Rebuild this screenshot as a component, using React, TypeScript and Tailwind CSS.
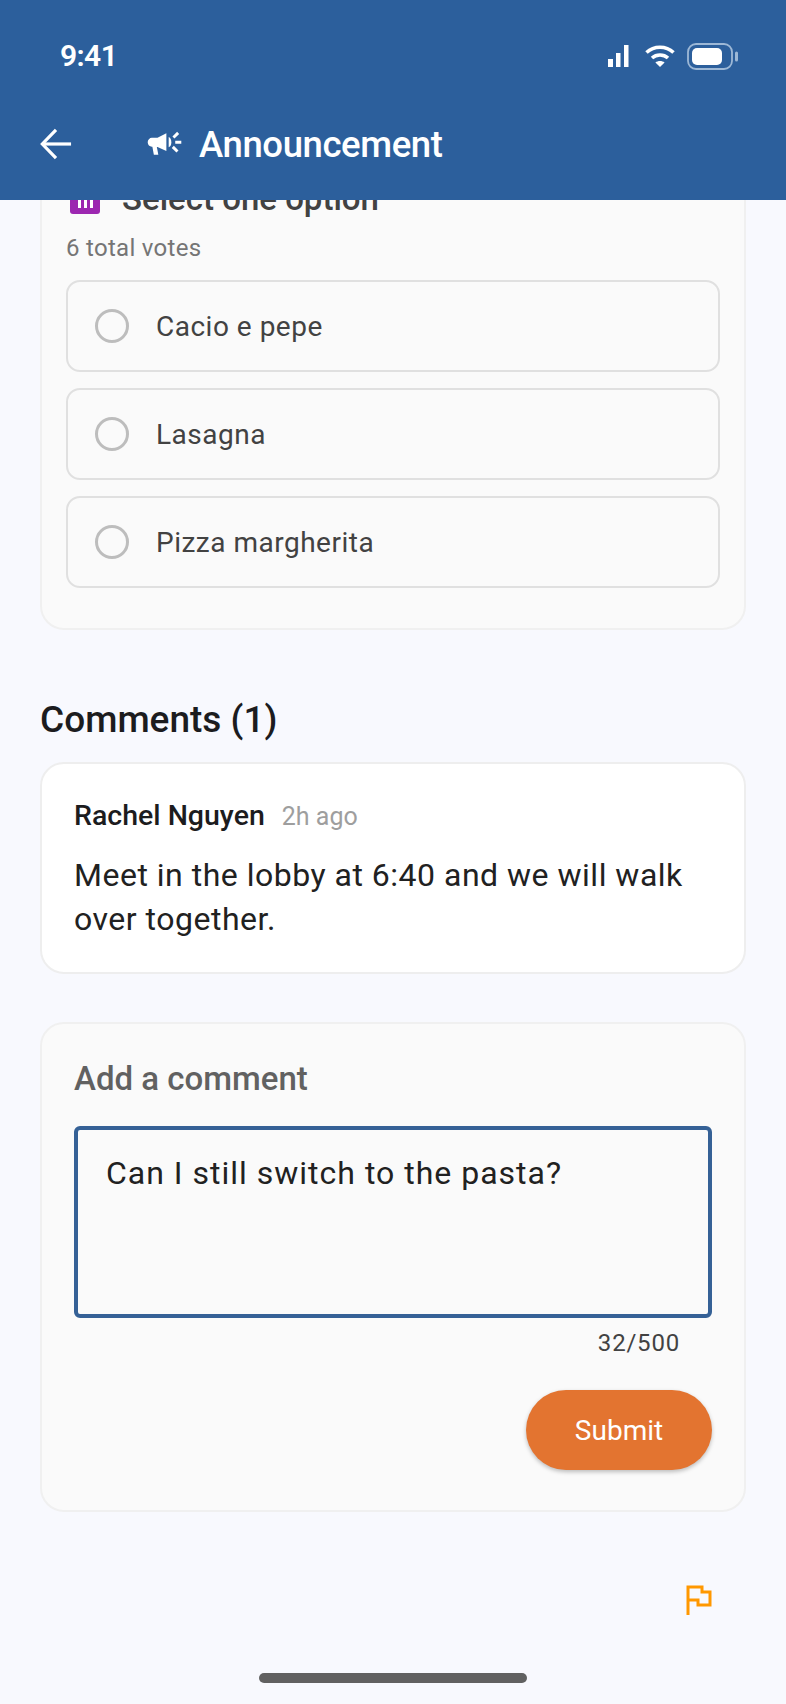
import React from "react";

const font = { fontFamily: "Roboto, 'Noto Sans', sans-serif" };

function Option({ label }: { label: string }) {
  return (
    <div className="flex h-[92px] items-center rounded-[14px] border-2 border-[#e0e0e0] pl-[27px]">
      <span className="h-[34px] w-[34px] shrink-0 rounded-full border-[3.5px] border-[#bdbdbd]" />
      <span className="ml-[27px] mt-[1px] text-[28px] leading-none tracking-[0.5px] text-[#424242]">{label}</span>
    </div>
  );
}

export default function App() {
  return (
    <div style={font} className="flex h-[1704px] w-[786px] flex-col overflow-hidden bg-[#f8f9fe]">
      <header className="z-10 flex h-[200px] shrink-0 flex-col bg-[#2c5f9c] text-white">
        <div className="flex h-[112px] items-center justify-between pl-[60px] pr-[47px]">
          <span className="mt-[-1px] text-[30px] font-semibold leading-none tracking-[-0.6px]">9:41</span>
          <div className="flex items-center">
            <svg width="24" height="24" viewBox="0 0 24 24" fill="#fff">
              <rect x="2" y="15" width="5" height="8" />
              <rect x="10" y="9" width="4.5" height="14" />
              <rect x="18" y="1" width="4.5" height="22" />
            </svg>
            <svg className="ml-[15px]" width="30" height="24" viewBox="0 0 30 24" fill="none" stroke="#fff" strokeWidth="3.6">
              <path d="M1.5 8.5C9 1.5 21 1.5 28.5 8.5" />
              <path d="M7 14C11.5 10 18.5 10 23 14" />
              <path d="M15 23l-4.6-4.6c2.6-2 6.6-2 9.2 0z" fill="#fff" stroke="none" />
            </svg>
            <svg className="ml-[12px]" width="52" height="27" viewBox="0 0 52 27" fill="none">
              <rect x="1" y="1" width="44" height="25" rx="8" stroke="#9db8d6" strokeWidth="1.8" />
              <rect x="5" y="5" width="30" height="17" rx="5" fill="#fff" />
              <rect x="48" y="8.5" width="3" height="10" rx="1.5" fill="#9db8d6" />
            </svg>
          </div>
        </div>
        <div className="flex h-[64px] items-center pl-[40px]">
          <svg width="32" height="34" viewBox="0 0 34 34" fill="none" stroke="#fff" strokeWidth="3.4">
            <path d="M33 17H3" />
            <path d="M17 2L2.5 17 17 32" />
          </svg>
          <svg className="ml-[75px]" width="35" height="28" viewBox="0 0 36 30" fill="#fff">
            <path d="M20 3.5v19l-9.5-4.3H9.8l1.6 8.3H6.6L5 18H4.5C2 18 0 15.800 0 13.2 0 10.6 2 8.300 4.500 8.300h6z" />
            <path d="M22.500 7.500c2 1 2.800 3 2.800 5.500s-.8 4.600-2.800 5.600z" />
            <path d="M26.500 7l5-5 2.200 2.200-5 5zM29.500 11.500h6.500v3.200h-6.500zM28 17l5 5-2.200 2.200-5-5z" />
          </svg>
          <span className="ml-[17px] mt-[3px] text-[36.500px] font-medium leading-none tracking-[-0.4px]">Announcement</span>
        </div>
      </header>

      <main className="relative flex flex-1 flex-col overflow-hidden px-[40px]">
        <section className="mt-[-44px] h-[474px] shrink-0 rounded-[24px] border-2 border-[#f0f0f0] bg-[#fafafa] px-[24px]">
          <div className="flex h-[44px] items-end">
            <span className="ml-[4px] mb-[-12px] h-[26px] w-[30px] rounded-[3px] bg-[#9c27b0] text-center">
              <span className="mt-[6px] inline-flex gap-[3px]">
                <i className="h-[14px] w-[3px] bg-white" />
                <i className="h-[14px] w-[3px] bg-white" />
                <i className="h-[14px] w-[3px] bg-white" />
              </span>
            </span>
            <span className="ml-[22px] mb-[-13px] text-[33px] font-medium leading-none text-[#424242]">Select one option</span>
          </div>
          <p className="mt-[31px] text-[24px] leading-[30px] tracking-[0.3px] text-[#757575]">6 total votes</p>
          <div className="mt-[17px] flex flex-col gap-[16px]">
            <Option label="Cacio e pepe" />
            <Option label="Lasagna" />
            <Option label="Pizza margherita" />
          </div>
        </section>

        <h2 className="mt-[70px] text-[37px] font-medium leading-[40px] text-[#1c1c1e]">Comments (1)</h2>

        <section className="mt-[22px] h-[212px] shrink-0 rounded-[24px] border-2 border-[#eeeeee] bg-white px-[32px] pt-[36px]">
          <div className="flex items-baseline">
            <span className="text-[28.500px] font-medium leading-[32px] text-[#1c1c1e]">Rachel Nguyen</span>
            <span className="ml-[17px] text-[25px] leading-[32px] text-[#9e9e9e]">2h ago</span>
          </div>
          <p className="mt-[20px] text-[32px] leading-[44px] tracking-[0.5px] text-[#212121]">
            Meet in the lobby at 6:40 and we will walk over together.
          </p>
        </section>

        <section className="mt-[48px] flex h-[490px] shrink-0 flex-col rounded-[24px] border-2 border-[#f0f0f0] bg-[#fafafa] px-[32px] pt-[35px]">
          <h3 className="text-[33px] font-medium leading-[40px] text-[#616161]">Add a comment</h3>
          <div className="mt-[27px] h-[192px] rounded-[6px] border-[4px] border-[#356196] px-[28px] pt-[23px] text-[32px] leading-[40px] tracking-[1px] text-[#212121]">
            Can I still switch to the pasta?
          </div>
          <p className="mt-[10px] pr-[32px] text-right text-[24px] leading-[30px] tracking-[0.8px] text-[#424242]">32/500</p>
          <div className="mt-[32px] flex justify-end">
            <button className="h-[80px] w-[186px] rounded-full bg-[#e37430] pt-[1px] text-[28px] text-white shadow-[0_2px_4px_rgba(0,0,0,0.25)]">Submit</button>
          </div>
        </section>

        <div className="mt-[73px] flex justify-end pr-[34px]">
          <svg width="26" height="30" viewBox="0 0 26 30" fill="none" stroke="#ff9800" strokeWidth="3">
            <path d="M2 30V2h14v5h8v13H12v-5H2" />
          </svg>
        </div>

        <div className="absolute bottom-[21px] left-[259px] h-[10px] w-[268px] rounded-full bg-[#616161]" />
      </main>
    </div>
  );
}
